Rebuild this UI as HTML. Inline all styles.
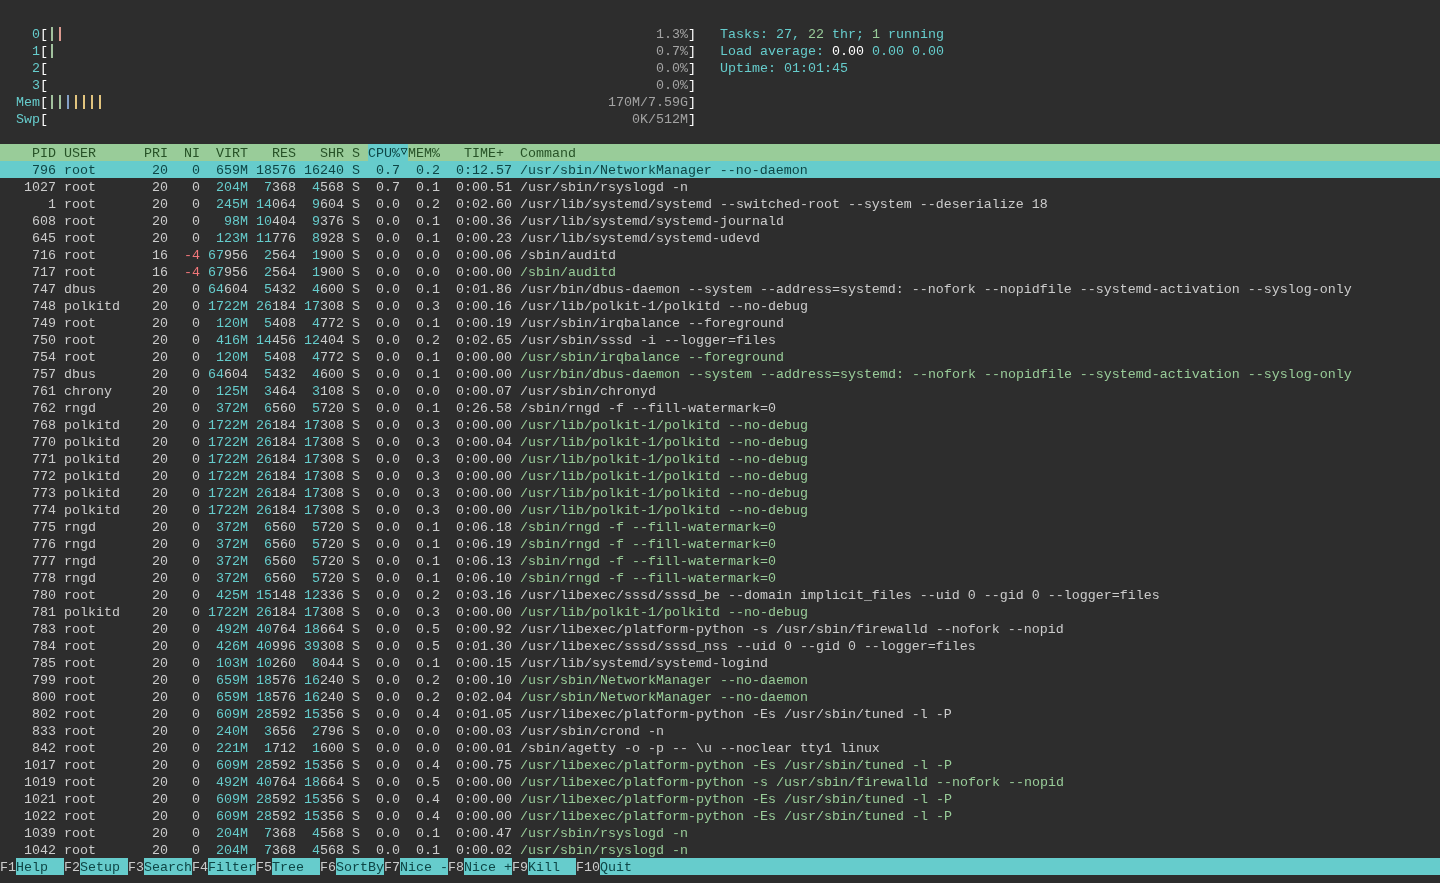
<!DOCTYPE html>
<html><head><meta charset="utf-8"><style>
html,body{margin:0;padding:0;background:#2d2d2d;}
body{width:1440px;height:883px;overflow:hidden;position:relative;font-family:"Liberation Mono",monospace;font-size:13.333px;line-height:17px;}
.b{position:absolute;height:17px;}
.t{position:absolute;white-space:pre;height:17px;}
#w{position:absolute;left:0;top:0;width:1440px;height:883px;will-change:transform;}
</style></head><body><div id="w">
<span class="t" style="left:32px;top:25.8px;color:#66cccc">0</span>
<span class="t" style="left:40px;top:25.8px;color:#ffffff">[</span>
<span class="t" style="left:656px;top:25.8px;color:#a3a3a3">1.3%</span>
<span class="t" style="left:688px;top:25.8px;color:#ffffff">]</span>
<span class="t" style="left:720px;top:25.8px;color:#66cccc">Tasks:</span>
<span class="t" style="left:776px;top:25.8px;color:#66cccc">27</span>
<span class="t" style="left:792px;top:25.8px;color:#66cccc">,</span>
<span class="t" style="left:808px;top:25.8px;color:#99cc99">22</span>
<span class="t" style="left:832px;top:25.8px;color:#66cccc">thr;</span>
<span class="t" style="left:872px;top:25.8px;color:#99cc99">1</span>
<span class="t" style="left:888px;top:25.8px;color:#66cccc">running</span>
<span class="t" style="left:32px;top:42.8px;color:#66cccc">1</span>
<span class="t" style="left:40px;top:42.8px;color:#ffffff">[</span>
<span class="t" style="left:656px;top:42.8px;color:#a3a3a3">0.7%</span>
<span class="t" style="left:688px;top:42.8px;color:#ffffff">]</span>
<span class="t" style="left:720px;top:42.8px;color:#66cccc">Load average:</span>
<span class="t" style="left:832px;top:42.8px;color:#ffffff">0.00</span>
<span class="t" style="left:872px;top:42.8px;color:#66cccc">0.00</span>
<span class="t" style="left:912px;top:42.8px;color:#66cccc">0.00</span>
<span class="t" style="left:32px;top:59.8px;color:#66cccc">2</span>
<span class="t" style="left:40px;top:59.8px;color:#ffffff">[</span>
<span class="t" style="left:656px;top:59.8px;color:#a3a3a3">0.0%</span>
<span class="t" style="left:688px;top:59.8px;color:#ffffff">]</span>
<span class="t" style="left:720px;top:59.8px;color:#66cccc">Uptime:</span>
<span class="t" style="left:784px;top:59.8px;color:#66cccc">01:01:45</span>
<span class="t" style="left:32px;top:76.8px;color:#66cccc">3</span>
<span class="t" style="left:40px;top:76.8px;color:#ffffff">[</span>
<span class="t" style="left:656px;top:76.8px;color:#a3a3a3">0.0%</span>
<span class="t" style="left:688px;top:76.8px;color:#ffffff">]</span>
<span class="t" style="left:16px;top:93.8px;color:#66cccc">Mem</span>
<span class="t" style="left:40px;top:93.8px;color:#ffffff">[</span>
<span class="t" style="left:608px;top:93.8px;color:#a3a3a3">170M/7.59G</span>
<span class="t" style="left:688px;top:93.8px;color:#ffffff">]</span>
<span class="t" style="left:16px;top:110.8px;color:#66cccc">Swp</span>
<span class="t" style="left:40px;top:110.8px;color:#ffffff">[</span>
<span class="t" style="left:632px;top:110.8px;color:#a3a3a3">0K/512M</span>
<span class="t" style="left:688px;top:110.8px;color:#ffffff">]</span>
<div class="b" style="left:0px;top:143.5px;width:368px;background:#99cc99"></div>
<div class="b" style="left:368px;top:143.5px;width:40px;background:#66cccc"></div>
<div class="b" style="left:408px;top:143.5px;width:1032px;background:#99cc99"></div>
<span class="t" style="left:32px;top:144.8px;color:#275227">PID USER</span>
<span class="t" style="left:144px;top:144.8px;color:#275227">PRI  NI  VIRT   RES   SHR S</span>
<span class="t" style="left:368px;top:144.8px;color:#0e4646">CPU%</span>
<span class="t" style="left:408px;top:144.8px;color:#275227">MEM%   TIME+  Command</span>
<div class="b" style="left:0px;top:160.5px;width:1440px;background:#66cccc"></div>
<span class="t" style="left:32px;top:161.8px;color:#0e4646">796 root</span>
<span class="t" style="left:152px;top:161.8px;color:#0e4646">20   0  659M 18576 16240 S  0.7  0.2  0:12.57 /usr/sbin/NetworkManager --no-daemon</span>
<span class="t" style="left:24px;top:178.8px;color:#cccccc">1027 root</span>
<span class="t" style="left:152px;top:178.8px;color:#cccccc">20   0</span>
<span class="t" style="left:216px;top:178.8px;color:#66cccc">204M  7</span>
<span class="t" style="left:272px;top:178.8px;color:#cccccc">368</span>
<span class="t" style="left:312px;top:178.8px;color:#66cccc">4</span>
<span class="t" style="left:320px;top:178.8px;color:#cccccc">568 S  0.7  0.1  0:00.51 /usr/sbin/rsyslogd -n</span>
<span class="t" style="left:48px;top:195.8px;color:#cccccc">1 root</span>
<span class="t" style="left:152px;top:195.8px;color:#cccccc">20   0</span>
<span class="t" style="left:216px;top:195.8px;color:#66cccc">245M 14</span>
<span class="t" style="left:272px;top:195.8px;color:#cccccc">064</span>
<span class="t" style="left:312px;top:195.8px;color:#66cccc">9</span>
<span class="t" style="left:320px;top:195.8px;color:#cccccc">604 S  0.0  0.2  0:02.60 /usr/lib/systemd/systemd --switched-root --system --deserialize 18</span>
<span class="t" style="left:32px;top:212.8px;color:#cccccc">608 root</span>
<span class="t" style="left:152px;top:212.8px;color:#cccccc">20   0</span>
<span class="t" style="left:224px;top:212.8px;color:#66cccc">98M 10</span>
<span class="t" style="left:272px;top:212.8px;color:#cccccc">404</span>
<span class="t" style="left:312px;top:212.8px;color:#66cccc">9</span>
<span class="t" style="left:320px;top:212.8px;color:#cccccc">376 S  0.0  0.1  0:00.36 /usr/lib/systemd/systemd-journald</span>
<span class="t" style="left:32px;top:229.8px;color:#cccccc">645 root</span>
<span class="t" style="left:152px;top:229.8px;color:#cccccc">20   0</span>
<span class="t" style="left:216px;top:229.8px;color:#66cccc">123M 11</span>
<span class="t" style="left:272px;top:229.8px;color:#cccccc">776</span>
<span class="t" style="left:312px;top:229.8px;color:#66cccc">8</span>
<span class="t" style="left:320px;top:229.8px;color:#cccccc">928 S  0.0  0.1  0:00.23 /usr/lib/systemd/systemd-udevd</span>
<span class="t" style="left:32px;top:246.8px;color:#cccccc">716 root</span>
<span class="t" style="left:152px;top:246.8px;color:#cccccc">16</span>
<span class="t" style="left:184px;top:246.8px;color:#f2777a">-4</span>
<span class="t" style="left:208px;top:246.8px;color:#66cccc">67</span>
<span class="t" style="left:224px;top:246.8px;color:#cccccc">956</span>
<span class="t" style="left:264px;top:246.8px;color:#66cccc">2</span>
<span class="t" style="left:272px;top:246.8px;color:#cccccc">564</span>
<span class="t" style="left:312px;top:246.8px;color:#66cccc">1</span>
<span class="t" style="left:320px;top:246.8px;color:#cccccc">900 S  0.0  0.0  0:00.06 /sbin/auditd</span>
<span class="t" style="left:32px;top:263.8px;color:#cccccc">717 root</span>
<span class="t" style="left:152px;top:263.8px;color:#cccccc">16</span>
<span class="t" style="left:184px;top:263.8px;color:#f2777a">-4</span>
<span class="t" style="left:208px;top:263.8px;color:#66cccc">67</span>
<span class="t" style="left:224px;top:263.8px;color:#cccccc">956</span>
<span class="t" style="left:264px;top:263.8px;color:#66cccc">2</span>
<span class="t" style="left:272px;top:263.8px;color:#cccccc">564</span>
<span class="t" style="left:312px;top:263.8px;color:#66cccc">1</span>
<span class="t" style="left:320px;top:263.8px;color:#cccccc">900 S  0.0  0.0  0:00.00</span>
<span class="t" style="left:520px;top:263.8px;color:#99cc99">/sbin/auditd</span>
<span class="t" style="left:32px;top:280.8px;color:#cccccc">747 dbus</span>
<span class="t" style="left:152px;top:280.8px;color:#cccccc">20   0</span>
<span class="t" style="left:208px;top:280.8px;color:#66cccc">64</span>
<span class="t" style="left:224px;top:280.8px;color:#cccccc">604</span>
<span class="t" style="left:264px;top:280.8px;color:#66cccc">5</span>
<span class="t" style="left:272px;top:280.8px;color:#cccccc">432</span>
<span class="t" style="left:312px;top:280.8px;color:#66cccc">4</span>
<span class="t" style="left:320px;top:280.8px;color:#cccccc">600 S  0.0  0.1  0:01.86 /usr/bin/dbus-daemon --system --address=systemd: --nofork --nopidfile --systemd-activation --syslog-only</span>
<span class="t" style="left:32px;top:297.8px;color:#cccccc">748 polkitd</span>
<span class="t" style="left:152px;top:297.8px;color:#cccccc">20   0</span>
<span class="t" style="left:208px;top:297.8px;color:#66cccc">1722M 26</span>
<span class="t" style="left:272px;top:297.8px;color:#cccccc">184</span>
<span class="t" style="left:304px;top:297.8px;color:#66cccc">17</span>
<span class="t" style="left:320px;top:297.8px;color:#cccccc">308 S  0.0  0.3  0:00.16 /usr/lib/polkit-1/polkitd --no-debug</span>
<span class="t" style="left:32px;top:314.8px;color:#cccccc">749 root</span>
<span class="t" style="left:152px;top:314.8px;color:#cccccc">20   0</span>
<span class="t" style="left:216px;top:314.8px;color:#66cccc">120M  5</span>
<span class="t" style="left:272px;top:314.8px;color:#cccccc">408</span>
<span class="t" style="left:312px;top:314.8px;color:#66cccc">4</span>
<span class="t" style="left:320px;top:314.8px;color:#cccccc">772 S  0.0  0.1  0:00.19 /usr/sbin/irqbalance --foreground</span>
<span class="t" style="left:32px;top:331.8px;color:#cccccc">750 root</span>
<span class="t" style="left:152px;top:331.8px;color:#cccccc">20   0</span>
<span class="t" style="left:216px;top:331.8px;color:#66cccc">416M 14</span>
<span class="t" style="left:272px;top:331.8px;color:#cccccc">456</span>
<span class="t" style="left:304px;top:331.8px;color:#66cccc">12</span>
<span class="t" style="left:320px;top:331.8px;color:#cccccc">404 S  0.0  0.2  0:02.65 /usr/sbin/sssd -i --logger=files</span>
<span class="t" style="left:32px;top:348.8px;color:#cccccc">754 root</span>
<span class="t" style="left:152px;top:348.8px;color:#cccccc">20   0</span>
<span class="t" style="left:216px;top:348.8px;color:#66cccc">120M  5</span>
<span class="t" style="left:272px;top:348.8px;color:#cccccc">408</span>
<span class="t" style="left:312px;top:348.8px;color:#66cccc">4</span>
<span class="t" style="left:320px;top:348.8px;color:#cccccc">772 S  0.0  0.1  0:00.00</span>
<span class="t" style="left:520px;top:348.8px;color:#99cc99">/usr/sbin/irqbalance --foreground</span>
<span class="t" style="left:32px;top:365.8px;color:#cccccc">757 dbus</span>
<span class="t" style="left:152px;top:365.8px;color:#cccccc">20   0</span>
<span class="t" style="left:208px;top:365.8px;color:#66cccc">64</span>
<span class="t" style="left:224px;top:365.8px;color:#cccccc">604</span>
<span class="t" style="left:264px;top:365.8px;color:#66cccc">5</span>
<span class="t" style="left:272px;top:365.8px;color:#cccccc">432</span>
<span class="t" style="left:312px;top:365.8px;color:#66cccc">4</span>
<span class="t" style="left:320px;top:365.8px;color:#cccccc">600 S  0.0  0.1  0:00.00</span>
<span class="t" style="left:520px;top:365.8px;color:#99cc99">/usr/bin/dbus-daemon --system --address=systemd: --nofork --nopidfile --systemd-activation --syslog-only</span>
<span class="t" style="left:32px;top:382.8px;color:#cccccc">761 chrony</span>
<span class="t" style="left:152px;top:382.8px;color:#cccccc">20   0</span>
<span class="t" style="left:216px;top:382.8px;color:#66cccc">125M  3</span>
<span class="t" style="left:272px;top:382.8px;color:#cccccc">464</span>
<span class="t" style="left:312px;top:382.8px;color:#66cccc">3</span>
<span class="t" style="left:320px;top:382.8px;color:#cccccc">108 S  0.0  0.0  0:00.07 /usr/sbin/chronyd</span>
<span class="t" style="left:32px;top:399.8px;color:#cccccc">762 rngd</span>
<span class="t" style="left:152px;top:399.8px;color:#cccccc">20   0</span>
<span class="t" style="left:216px;top:399.8px;color:#66cccc">372M  6</span>
<span class="t" style="left:272px;top:399.8px;color:#cccccc">560</span>
<span class="t" style="left:312px;top:399.8px;color:#66cccc">5</span>
<span class="t" style="left:320px;top:399.8px;color:#cccccc">720 S  0.0  0.1  0:26.58 /sbin/rngd -f --fill-watermark=0</span>
<span class="t" style="left:32px;top:416.8px;color:#cccccc">768 polkitd</span>
<span class="t" style="left:152px;top:416.8px;color:#cccccc">20   0</span>
<span class="t" style="left:208px;top:416.8px;color:#66cccc">1722M 26</span>
<span class="t" style="left:272px;top:416.8px;color:#cccccc">184</span>
<span class="t" style="left:304px;top:416.8px;color:#66cccc">17</span>
<span class="t" style="left:320px;top:416.8px;color:#cccccc">308 S  0.0  0.3  0:00.00</span>
<span class="t" style="left:520px;top:416.8px;color:#99cc99">/usr/lib/polkit-1/polkitd --no-debug</span>
<span class="t" style="left:32px;top:433.8px;color:#cccccc">770 polkitd</span>
<span class="t" style="left:152px;top:433.8px;color:#cccccc">20   0</span>
<span class="t" style="left:208px;top:433.8px;color:#66cccc">1722M 26</span>
<span class="t" style="left:272px;top:433.8px;color:#cccccc">184</span>
<span class="t" style="left:304px;top:433.8px;color:#66cccc">17</span>
<span class="t" style="left:320px;top:433.8px;color:#cccccc">308 S  0.0  0.3  0:00.04</span>
<span class="t" style="left:520px;top:433.8px;color:#99cc99">/usr/lib/polkit-1/polkitd --no-debug</span>
<span class="t" style="left:32px;top:450.8px;color:#cccccc">771 polkitd</span>
<span class="t" style="left:152px;top:450.8px;color:#cccccc">20   0</span>
<span class="t" style="left:208px;top:450.8px;color:#66cccc">1722M 26</span>
<span class="t" style="left:272px;top:450.8px;color:#cccccc">184</span>
<span class="t" style="left:304px;top:450.8px;color:#66cccc">17</span>
<span class="t" style="left:320px;top:450.8px;color:#cccccc">308 S  0.0  0.3  0:00.00</span>
<span class="t" style="left:520px;top:450.8px;color:#99cc99">/usr/lib/polkit-1/polkitd --no-debug</span>
<span class="t" style="left:32px;top:467.8px;color:#cccccc">772 polkitd</span>
<span class="t" style="left:152px;top:467.8px;color:#cccccc">20   0</span>
<span class="t" style="left:208px;top:467.8px;color:#66cccc">1722M 26</span>
<span class="t" style="left:272px;top:467.8px;color:#cccccc">184</span>
<span class="t" style="left:304px;top:467.8px;color:#66cccc">17</span>
<span class="t" style="left:320px;top:467.8px;color:#cccccc">308 S  0.0  0.3  0:00.00</span>
<span class="t" style="left:520px;top:467.8px;color:#99cc99">/usr/lib/polkit-1/polkitd --no-debug</span>
<span class="t" style="left:32px;top:484.8px;color:#cccccc">773 polkitd</span>
<span class="t" style="left:152px;top:484.8px;color:#cccccc">20   0</span>
<span class="t" style="left:208px;top:484.8px;color:#66cccc">1722M 26</span>
<span class="t" style="left:272px;top:484.8px;color:#cccccc">184</span>
<span class="t" style="left:304px;top:484.8px;color:#66cccc">17</span>
<span class="t" style="left:320px;top:484.8px;color:#cccccc">308 S  0.0  0.3  0:00.00</span>
<span class="t" style="left:520px;top:484.8px;color:#99cc99">/usr/lib/polkit-1/polkitd --no-debug</span>
<span class="t" style="left:32px;top:501.8px;color:#cccccc">774 polkitd</span>
<span class="t" style="left:152px;top:501.8px;color:#cccccc">20   0</span>
<span class="t" style="left:208px;top:501.8px;color:#66cccc">1722M 26</span>
<span class="t" style="left:272px;top:501.8px;color:#cccccc">184</span>
<span class="t" style="left:304px;top:501.8px;color:#66cccc">17</span>
<span class="t" style="left:320px;top:501.8px;color:#cccccc">308 S  0.0  0.3  0:00.00</span>
<span class="t" style="left:520px;top:501.8px;color:#99cc99">/usr/lib/polkit-1/polkitd --no-debug</span>
<span class="t" style="left:32px;top:518.8px;color:#cccccc">775 rngd</span>
<span class="t" style="left:152px;top:518.8px;color:#cccccc">20   0</span>
<span class="t" style="left:216px;top:518.8px;color:#66cccc">372M  6</span>
<span class="t" style="left:272px;top:518.8px;color:#cccccc">560</span>
<span class="t" style="left:312px;top:518.8px;color:#66cccc">5</span>
<span class="t" style="left:320px;top:518.8px;color:#cccccc">720 S  0.0  0.1  0:06.18</span>
<span class="t" style="left:520px;top:518.8px;color:#99cc99">/sbin/rngd -f --fill-watermark=0</span>
<span class="t" style="left:32px;top:535.8px;color:#cccccc">776 rngd</span>
<span class="t" style="left:152px;top:535.8px;color:#cccccc">20   0</span>
<span class="t" style="left:216px;top:535.8px;color:#66cccc">372M  6</span>
<span class="t" style="left:272px;top:535.8px;color:#cccccc">560</span>
<span class="t" style="left:312px;top:535.8px;color:#66cccc">5</span>
<span class="t" style="left:320px;top:535.8px;color:#cccccc">720 S  0.0  0.1  0:06.19</span>
<span class="t" style="left:520px;top:535.8px;color:#99cc99">/sbin/rngd -f --fill-watermark=0</span>
<span class="t" style="left:32px;top:552.8px;color:#cccccc">777 rngd</span>
<span class="t" style="left:152px;top:552.8px;color:#cccccc">20   0</span>
<span class="t" style="left:216px;top:552.8px;color:#66cccc">372M  6</span>
<span class="t" style="left:272px;top:552.8px;color:#cccccc">560</span>
<span class="t" style="left:312px;top:552.8px;color:#66cccc">5</span>
<span class="t" style="left:320px;top:552.8px;color:#cccccc">720 S  0.0  0.1  0:06.13</span>
<span class="t" style="left:520px;top:552.8px;color:#99cc99">/sbin/rngd -f --fill-watermark=0</span>
<span class="t" style="left:32px;top:569.8px;color:#cccccc">778 rngd</span>
<span class="t" style="left:152px;top:569.8px;color:#cccccc">20   0</span>
<span class="t" style="left:216px;top:569.8px;color:#66cccc">372M  6</span>
<span class="t" style="left:272px;top:569.8px;color:#cccccc">560</span>
<span class="t" style="left:312px;top:569.8px;color:#66cccc">5</span>
<span class="t" style="left:320px;top:569.8px;color:#cccccc">720 S  0.0  0.1  0:06.10</span>
<span class="t" style="left:520px;top:569.8px;color:#99cc99">/sbin/rngd -f --fill-watermark=0</span>
<span class="t" style="left:32px;top:586.8px;color:#cccccc">780 root</span>
<span class="t" style="left:152px;top:586.8px;color:#cccccc">20   0</span>
<span class="t" style="left:216px;top:586.8px;color:#66cccc">425M 15</span>
<span class="t" style="left:272px;top:586.8px;color:#cccccc">148</span>
<span class="t" style="left:304px;top:586.8px;color:#66cccc">12</span>
<span class="t" style="left:320px;top:586.8px;color:#cccccc">336 S  0.0  0.2  0:03.16 /usr/libexec/sssd/sssd_be --domain implicit_files --uid 0 --gid 0 --logger=files</span>
<span class="t" style="left:32px;top:603.8px;color:#cccccc">781 polkitd</span>
<span class="t" style="left:152px;top:603.8px;color:#cccccc">20   0</span>
<span class="t" style="left:208px;top:603.8px;color:#66cccc">1722M 26</span>
<span class="t" style="left:272px;top:603.8px;color:#cccccc">184</span>
<span class="t" style="left:304px;top:603.8px;color:#66cccc">17</span>
<span class="t" style="left:320px;top:603.8px;color:#cccccc">308 S  0.0  0.3  0:00.00</span>
<span class="t" style="left:520px;top:603.8px;color:#99cc99">/usr/lib/polkit-1/polkitd --no-debug</span>
<span class="t" style="left:32px;top:620.8px;color:#cccccc">783 root</span>
<span class="t" style="left:152px;top:620.8px;color:#cccccc">20   0</span>
<span class="t" style="left:216px;top:620.8px;color:#66cccc">492M 40</span>
<span class="t" style="left:272px;top:620.8px;color:#cccccc">764</span>
<span class="t" style="left:304px;top:620.8px;color:#66cccc">18</span>
<span class="t" style="left:320px;top:620.8px;color:#cccccc">664 S  0.0  0.5  0:00.92 /usr/libexec/platform-python -s /usr/sbin/firewalld --nofork --nopid</span>
<span class="t" style="left:32px;top:637.8px;color:#cccccc">784 root</span>
<span class="t" style="left:152px;top:637.8px;color:#cccccc">20   0</span>
<span class="t" style="left:216px;top:637.8px;color:#66cccc">426M 40</span>
<span class="t" style="left:272px;top:637.8px;color:#cccccc">996</span>
<span class="t" style="left:304px;top:637.8px;color:#66cccc">39</span>
<span class="t" style="left:320px;top:637.8px;color:#cccccc">308 S  0.0  0.5  0:01.30 /usr/libexec/sssd/sssd_nss --uid 0 --gid 0 --logger=files</span>
<span class="t" style="left:32px;top:654.8px;color:#cccccc">785 root</span>
<span class="t" style="left:152px;top:654.8px;color:#cccccc">20   0</span>
<span class="t" style="left:216px;top:654.8px;color:#66cccc">103M 10</span>
<span class="t" style="left:272px;top:654.8px;color:#cccccc">260</span>
<span class="t" style="left:312px;top:654.8px;color:#66cccc">8</span>
<span class="t" style="left:320px;top:654.8px;color:#cccccc">044 S  0.0  0.1  0:00.15 /usr/lib/systemd/systemd-logind</span>
<span class="t" style="left:32px;top:671.8px;color:#cccccc">799 root</span>
<span class="t" style="left:152px;top:671.8px;color:#cccccc">20   0</span>
<span class="t" style="left:216px;top:671.8px;color:#66cccc">659M 18</span>
<span class="t" style="left:272px;top:671.8px;color:#cccccc">576</span>
<span class="t" style="left:304px;top:671.8px;color:#66cccc">16</span>
<span class="t" style="left:320px;top:671.8px;color:#cccccc">240 S  0.0  0.2  0:00.10</span>
<span class="t" style="left:520px;top:671.8px;color:#99cc99">/usr/sbin/NetworkManager --no-daemon</span>
<span class="t" style="left:32px;top:688.8px;color:#cccccc">800 root</span>
<span class="t" style="left:152px;top:688.8px;color:#cccccc">20   0</span>
<span class="t" style="left:216px;top:688.8px;color:#66cccc">659M 18</span>
<span class="t" style="left:272px;top:688.8px;color:#cccccc">576</span>
<span class="t" style="left:304px;top:688.8px;color:#66cccc">16</span>
<span class="t" style="left:320px;top:688.8px;color:#cccccc">240 S  0.0  0.2  0:02.04</span>
<span class="t" style="left:520px;top:688.8px;color:#99cc99">/usr/sbin/NetworkManager --no-daemon</span>
<span class="t" style="left:32px;top:705.8px;color:#cccccc">802 root</span>
<span class="t" style="left:152px;top:705.8px;color:#cccccc">20   0</span>
<span class="t" style="left:216px;top:705.8px;color:#66cccc">609M 28</span>
<span class="t" style="left:272px;top:705.8px;color:#cccccc">592</span>
<span class="t" style="left:304px;top:705.8px;color:#66cccc">15</span>
<span class="t" style="left:320px;top:705.8px;color:#cccccc">356 S  0.0  0.4  0:01.05 /usr/libexec/platform-python -Es /usr/sbin/tuned -l -P</span>
<span class="t" style="left:32px;top:722.8px;color:#cccccc">833 root</span>
<span class="t" style="left:152px;top:722.8px;color:#cccccc">20   0</span>
<span class="t" style="left:216px;top:722.8px;color:#66cccc">240M  3</span>
<span class="t" style="left:272px;top:722.8px;color:#cccccc">656</span>
<span class="t" style="left:312px;top:722.8px;color:#66cccc">2</span>
<span class="t" style="left:320px;top:722.8px;color:#cccccc">796 S  0.0  0.0  0:00.03 /usr/sbin/crond -n</span>
<span class="t" style="left:32px;top:739.8px;color:#cccccc">842 root</span>
<span class="t" style="left:152px;top:739.8px;color:#cccccc">20   0</span>
<span class="t" style="left:216px;top:739.8px;color:#66cccc">221M  1</span>
<span class="t" style="left:272px;top:739.8px;color:#cccccc">712</span>
<span class="t" style="left:312px;top:739.8px;color:#66cccc">1</span>
<span class="t" style="left:320px;top:739.8px;color:#cccccc">600 S  0.0  0.0  0:00.01 /sbin/agetty -o -p -- \u --noclear tty1 linux</span>
<span class="t" style="left:24px;top:756.8px;color:#cccccc">1017 root</span>
<span class="t" style="left:152px;top:756.8px;color:#cccccc">20   0</span>
<span class="t" style="left:216px;top:756.8px;color:#66cccc">609M 28</span>
<span class="t" style="left:272px;top:756.8px;color:#cccccc">592</span>
<span class="t" style="left:304px;top:756.8px;color:#66cccc">15</span>
<span class="t" style="left:320px;top:756.8px;color:#cccccc">356 S  0.0  0.4  0:00.75</span>
<span class="t" style="left:520px;top:756.8px;color:#99cc99">/usr/libexec/platform-python -Es /usr/sbin/tuned -l -P</span>
<span class="t" style="left:24px;top:773.8px;color:#cccccc">1019 root</span>
<span class="t" style="left:152px;top:773.8px;color:#cccccc">20   0</span>
<span class="t" style="left:216px;top:773.8px;color:#66cccc">492M 40</span>
<span class="t" style="left:272px;top:773.8px;color:#cccccc">764</span>
<span class="t" style="left:304px;top:773.8px;color:#66cccc">18</span>
<span class="t" style="left:320px;top:773.8px;color:#cccccc">664 S  0.0  0.5  0:00.00</span>
<span class="t" style="left:520px;top:773.8px;color:#99cc99">/usr/libexec/platform-python -s /usr/sbin/firewalld --nofork --nopid</span>
<span class="t" style="left:24px;top:790.8px;color:#cccccc">1021 root</span>
<span class="t" style="left:152px;top:790.8px;color:#cccccc">20   0</span>
<span class="t" style="left:216px;top:790.8px;color:#66cccc">609M 28</span>
<span class="t" style="left:272px;top:790.8px;color:#cccccc">592</span>
<span class="t" style="left:304px;top:790.8px;color:#66cccc">15</span>
<span class="t" style="left:320px;top:790.8px;color:#cccccc">356 S  0.0  0.4  0:00.00</span>
<span class="t" style="left:520px;top:790.8px;color:#99cc99">/usr/libexec/platform-python -Es /usr/sbin/tuned -l -P</span>
<span class="t" style="left:24px;top:807.8px;color:#cccccc">1022 root</span>
<span class="t" style="left:152px;top:807.8px;color:#cccccc">20   0</span>
<span class="t" style="left:216px;top:807.8px;color:#66cccc">609M 28</span>
<span class="t" style="left:272px;top:807.8px;color:#cccccc">592</span>
<span class="t" style="left:304px;top:807.8px;color:#66cccc">15</span>
<span class="t" style="left:320px;top:807.8px;color:#cccccc">356 S  0.0  0.4  0:00.00</span>
<span class="t" style="left:520px;top:807.8px;color:#99cc99">/usr/libexec/platform-python -Es /usr/sbin/tuned -l -P</span>
<span class="t" style="left:24px;top:824.8px;color:#cccccc">1039 root</span>
<span class="t" style="left:152px;top:824.8px;color:#cccccc">20   0</span>
<span class="t" style="left:216px;top:824.8px;color:#66cccc">204M  7</span>
<span class="t" style="left:272px;top:824.8px;color:#cccccc">368</span>
<span class="t" style="left:312px;top:824.8px;color:#66cccc">4</span>
<span class="t" style="left:320px;top:824.8px;color:#cccccc">568 S  0.0  0.1  0:00.47</span>
<span class="t" style="left:520px;top:824.8px;color:#99cc99">/usr/sbin/rsyslogd -n</span>
<span class="t" style="left:24px;top:841.8px;color:#cccccc">1042 root</span>
<span class="t" style="left:152px;top:841.8px;color:#cccccc">20   0</span>
<span class="t" style="left:216px;top:841.8px;color:#66cccc">204M  7</span>
<span class="t" style="left:272px;top:841.8px;color:#cccccc">368</span>
<span class="t" style="left:312px;top:841.8px;color:#66cccc">4</span>
<span class="t" style="left:320px;top:841.8px;color:#cccccc">568 S  0.0  0.1  0:00.02</span>
<span class="t" style="left:520px;top:841.8px;color:#99cc99">/usr/sbin/rsyslogd -n</span>
<div class="b" style="left:16px;top:857.5px;width:48px;background:#66cccc"></div>
<div class="b" style="left:80px;top:857.5px;width:48px;background:#66cccc"></div>
<div class="b" style="left:144px;top:857.5px;width:48px;background:#66cccc"></div>
<div class="b" style="left:208px;top:857.5px;width:48px;background:#66cccc"></div>
<div class="b" style="left:272px;top:857.5px;width:48px;background:#66cccc"></div>
<div class="b" style="left:336px;top:857.5px;width:48px;background:#66cccc"></div>
<div class="b" style="left:400px;top:857.5px;width:48px;background:#66cccc"></div>
<div class="b" style="left:464px;top:857.5px;width:48px;background:#66cccc"></div>
<div class="b" style="left:528px;top:857.5px;width:48px;background:#66cccc"></div>
<div class="b" style="left:600px;top:857.5px;width:840px;background:#66cccc"></div>
<span class="t" style="left:0px;top:858.8px;color:#cccccc">F1</span>
<span class="t" style="left:16px;top:858.8px;color:#0e4646">Help</span>
<span class="t" style="left:64px;top:858.8px;color:#cccccc">F2</span>
<span class="t" style="left:80px;top:858.8px;color:#0e4646">Setup</span>
<span class="t" style="left:128px;top:858.8px;color:#cccccc">F3</span>
<span class="t" style="left:144px;top:858.8px;color:#0e4646">Search</span>
<span class="t" style="left:192px;top:858.8px;color:#cccccc">F4</span>
<span class="t" style="left:208px;top:858.8px;color:#0e4646">Filter</span>
<span class="t" style="left:256px;top:858.8px;color:#cccccc">F5</span>
<span class="t" style="left:272px;top:858.8px;color:#0e4646">Tree</span>
<span class="t" style="left:320px;top:858.8px;color:#cccccc">F6</span>
<span class="t" style="left:336px;top:858.8px;color:#0e4646">SortBy</span>
<span class="t" style="left:384px;top:858.8px;color:#cccccc">F7</span>
<span class="t" style="left:400px;top:858.8px;color:#0e4646">Nice -</span>
<span class="t" style="left:448px;top:858.8px;color:#cccccc">F8</span>
<span class="t" style="left:464px;top:858.8px;color:#0e4646">Nice +</span>
<span class="t" style="left:512px;top:858.8px;color:#cccccc">F9</span>
<span class="t" style="left:528px;top:858.8px;color:#0e4646">Kill</span>
<span class="t" style="left:576px;top:858.8px;color:#cccccc">F10</span>
<span class="t" style="left:600px;top:858.8px;color:#0e4646">Quit</span>
<div style="position:absolute;left:51.3px;top:27.4px;width:1.4px;height:14px;background:#a2c29e"></div>
<div style="position:absolute;left:59.3px;top:27.4px;width:1.4px;height:14px;background:#dc9a90"></div>
<div style="position:absolute;left:51.3px;top:44.4px;width:1.4px;height:14px;background:#a2c29e"></div>
<div style="position:absolute;left:51.3px;top:95.4px;width:1.4px;height:14px;background:#a2c29e"></div>
<div style="position:absolute;left:59.3px;top:95.4px;width:1.4px;height:14px;background:#a2c29e"></div>
<div style="position:absolute;left:67.3px;top:95.4px;width:1.4px;height:14px;background:#84a0c6"></div>
<div style="position:absolute;left:75.3px;top:95.4px;width:1.4px;height:14px;background:#e2c47e"></div>
<div style="position:absolute;left:83.3px;top:95.4px;width:1.4px;height:14px;background:#e2c47e"></div>
<div style="position:absolute;left:91.3px;top:95.4px;width:1.4px;height:14px;background:#e2c47e"></div>
<div style="position:absolute;left:99.3px;top:95.4px;width:1.4px;height:14px;background:#e2c47e"></div>
<svg style="position:absolute;left:400px;top:143.5px" width="8" height="17" viewBox="0 0 8 17"><path d="M1 4.6 H7 L4 10.4 Z" fill="none" stroke="#0e4646" stroke-width="1" stroke-linejoin="round"/></svg>
</div></body></html>
